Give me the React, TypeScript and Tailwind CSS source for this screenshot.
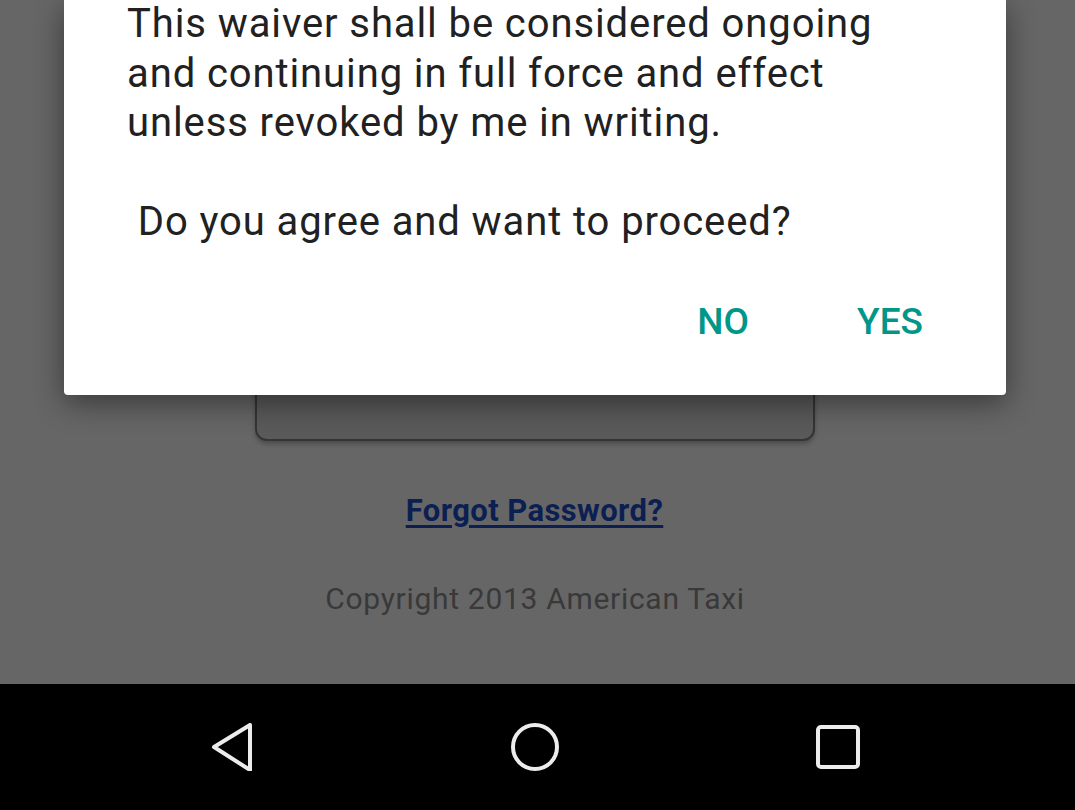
import React from "react";

const FONT = { fontFamily: "Roboto, 'Noto Sans', Arial, sans-serif" };

function NavBar() {
  return (
    <div className="h-[126px] bg-black flex items-center justify-center gap-[255px] pr-[6px]">
      <svg width="48" height="48" viewBox="0 0 48 48" fill="none" stroke="#ececec" strokeWidth="4" strokeLinejoin="round" strokeLinecap="round">
        <path d="M6 24 L42 2 L42 47 Z" />
      </svg>
      <svg width="48" height="48" viewBox="0 0 48 48" fill="none" stroke="#ececec" strokeWidth="4">
        <circle cx="24" cy="24" r="22" />
      </svg>
      <svg width="48" height="48" viewBox="0 0 48 48" fill="none" stroke="#ececec" strokeWidth="4">
        <rect x="4" y="4" width="40" height="40" rx="3" />
      </svg>
    </div>
  );
}

function Dialog() {
  return (
    <div className="absolute left-[64px] top-0 w-[942px] bg-white rounded-b-[4px] shadow-[0_8px_30px_rgba(0,0,0,0.45)]">
      <div className="px-[63px] mt-[-1px] text-[40px] tracking-[0.9px] leading-[49.5px] text-[#212121] whitespace-pre-line">
        {"This waiver shall be considered ongoing\nand continuing in full force and effect\nunless revoked by me in writing.\n\n\u00a0Do you agree and want to proceed?"}
      </div>
      <div className="flex justify-end gap-[108px] pr-[83px] mt-[53px] pb-[51px]">
        <button className="text-[37px] leading-[44px] font-medium text-[#009688]">NO</button>
        <button className="text-[37px] leading-[44px] font-medium text-[#009688]">YES</button>
      </div>
    </div>
  );
}

export default function App() {
  return (
    <div className="w-[1075px] h-[810px] overflow-hidden" style={FONT}>
      <div className="relative h-[684px] bg-[#666666] flex flex-col items-center">
        <div className="pt-[330px] ml-[-6px]">
          <div className="w-[560px] h-[111px] rounded-[12px] border-2 border-[#353535] bg-[#5a5a5a] shadow-[0_3px_4px_rgba(0,0,0,0.25)]" />
        </div>
        <a className="mt-[52px] ml-[-6px] text-[31px] tracking-[0.4px] leading-[36px] font-bold text-[#0c1f52] underline underline-offset-[4px]">
          Forgot Password?
        </a>
        <p className="mt-[52px] ml-[-5px] text-[30px] tracking-[0.7px] leading-[36px] text-[#393939]">
          Copyright 2013 American Taxi
        </p>
        <Dialog />
      </div>
      <NavBar />
    </div>
  );
}
